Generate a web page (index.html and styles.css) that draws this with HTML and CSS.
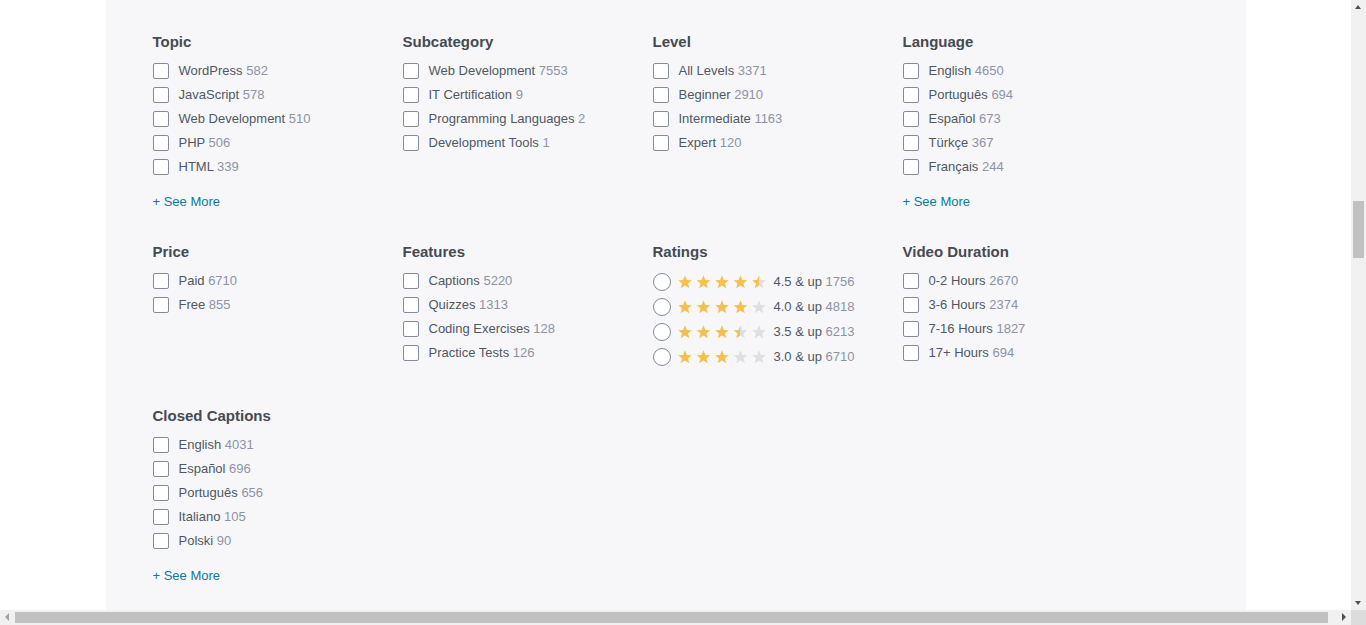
FILE: index.html
```html
<!DOCTYPE html>
<html lang="en">
<head>
<meta charset="utf-8">
<title>Filters</title>
<link rel="stylesheet" href="styles.css">
</head>
<body>
<svg class="defs" width="0" height="0" aria-hidden="true">
  <defs>
    <linearGradient id="half" x1="0" x2="1" y1="0" y2="0">
      <stop offset="50%" stop-color="#f4c150"/>
      <stop offset="50%" stop-color="#dedfe0"/>
    </linearGradient>
    <symbol id="star" viewBox="0 0 14 14">
      <polygon points="7,0.3 8.9,5.0 13.8,5.25 10.0,8.45 11.3,13.3 7,10.6 2.7,13.3 4.0,8.45 0.2,5.25 5.1,5.0"/>
    </symbol>
  </defs>
</svg>
<div class="page">
  <section class="filters">
    <div class="group">
      <h3>Topic</h3>
      <ul>
        <li><span class="box"></span>WordPress <span class="n">582</span></li>
        <li><span class="box"></span>JavaScript <span class="n">578</span></li>
        <li><span class="box"></span>Web Development <span class="n">510</span></li>
        <li><span class="box"></span>PHP <span class="n">506</span></li>
        <li><span class="box"></span>HTML <span class="n">339</span></li>
      </ul>
      <a class="more" href="#">+ See More</a>
    </div>
    <div class="group">
      <h3>Subcategory</h3>
      <ul>
        <li><span class="box"></span>Web Development <span class="n">7553</span></li>
        <li><span class="box"></span>IT Certification <span class="n">9</span></li>
        <li><span class="box"></span>Programming Languages <span class="n">2</span></li>
        <li><span class="box"></span>Development Tools <span class="n">1</span></li>
      </ul>
    </div>
    <div class="group">
      <h3>Level</h3>
      <ul>
        <li><span class="box"></span>All Levels <span class="n">3371</span></li>
        <li><span class="box"></span>Beginner <span class="n">2910</span></li>
        <li><span class="box"></span>Intermediate <span class="n">1163</span></li>
        <li><span class="box"></span>Expert <span class="n">120</span></li>
      </ul>
    </div>
    <div class="group">
      <h3>Language</h3>
      <ul>
        <li><span class="box"></span>English <span class="n">4650</span></li>
        <li><span class="box"></span>Português <span class="n">694</span></li>
        <li><span class="box"></span>Español <span class="n">673</span></li>
        <li><span class="box"></span>Türkçe <span class="n">367</span></li>
        <li><span class="box"></span>Français <span class="n">244</span></li>
      </ul>
      <a class="more" href="#">+ See More</a>
    </div>

    <div class="group">
      <h3>Price</h3>
      <ul>
        <li><span class="box"></span>Paid <span class="n">6710</span></li>
        <li><span class="box"></span>Free <span class="n">855</span></li>
      </ul>
    </div>
    <div class="group">
      <h3>Features</h3>
      <ul>
        <li><span class="box"></span>Captions <span class="n">5220</span></li>
        <li><span class="box"></span>Quizzes <span class="n">1313</span></li>
        <li><span class="box"></span>Coding Exercises <span class="n">128</span></li>
        <li><span class="box"></span>Practice Tests <span class="n">126</span></li>
      </ul>
    </div>
    <div class="group">
      <h3>Ratings</h3>
      <ul class="ratings">
        <li><span class="radio"></span>
          <svg class="stars" width="88" height="14" viewBox="0 0 88 14">
            <use href="#star" x="0" width="14" height="14" class="on"/>
            <use href="#star" x="18.5" width="14" height="14" class="on"/>
            <use href="#star" x="37" width="14" height="14" class="on"/>
            <use href="#star" x="55.5" width="14" height="14" class="on"/>
            <use href="#star" x="74" width="14" height="14" class="half"/>
          </svg>4.5 &amp; up <span class="n">1756</span></li>
        <li><span class="radio"></span>
          <svg class="stars" width="88" height="14" viewBox="0 0 88 14">
            <use href="#star" x="0" width="14" height="14" class="on"/>
            <use href="#star" x="18.5" width="14" height="14" class="on"/>
            <use href="#star" x="37" width="14" height="14" class="on"/>
            <use href="#star" x="55.5" width="14" height="14" class="on"/>
            <use href="#star" x="74" width="14" height="14" class="off"/>
          </svg>4.0 &amp; up <span class="n">4818</span></li>
        <li><span class="radio"></span>
          <svg class="stars" width="88" height="14" viewBox="0 0 88 14">
            <use href="#star" x="0" width="14" height="14" class="on"/>
            <use href="#star" x="18.5" width="14" height="14" class="on"/>
            <use href="#star" x="37" width="14" height="14" class="on"/>
            <use href="#star" x="55.5" width="14" height="14" class="half"/>
            <use href="#star" x="74" width="14" height="14" class="off"/>
          </svg>3.5 &amp; up <span class="n">6213</span></li>
        <li><span class="radio"></span>
          <svg class="stars" width="88" height="14" viewBox="0 0 88 14">
            <use href="#star" x="0" width="14" height="14" class="on"/>
            <use href="#star" x="18.5" width="14" height="14" class="on"/>
            <use href="#star" x="37" width="14" height="14" class="on"/>
            <use href="#star" x="55.5" width="14" height="14" class="off"/>
            <use href="#star" x="74" width="14" height="14" class="off"/>
          </svg>3.0 &amp; up <span class="n">6710</span></li>
      </ul>
    </div>
    <div class="group">
      <h3>Video Duration</h3>
      <ul>
        <li><span class="box"></span>0-2 Hours <span class="n">2670</span></li>
        <li><span class="box"></span>3-6 Hours <span class="n">2374</span></li>
        <li><span class="box"></span>7-16 Hours <span class="n">1827</span></li>
        <li><span class="box"></span>17+ Hours <span class="n">694</span></li>
      </ul>
    </div>

    <div class="group">
      <h3>Closed Captions</h3>
      <ul>
        <li><span class="box"></span>English <span class="n">4031</span></li>
        <li><span class="box"></span>Español <span class="n">696</span></li>
        <li><span class="box"></span>Português <span class="n">656</span></li>
        <li><span class="box"></span>Italiano <span class="n">105</span></li>
        <li><span class="box"></span>Polski <span class="n">90</span></li>
      </ul>
      <a class="more" href="#">+ See More</a>
    </div>
  </section>
</div>

<div class="scrollbar vertical" aria-hidden="true">
  <span class="arrow up"></span>
  <span class="thumb"></span>
  <span class="arrow down"></span>
</div>
<div class="scrollbar horizontal" aria-hidden="true">
  <span class="arrow left"></span>
  <span class="thumb"></span>
  <span class="arrow right"></span>
</div>
<div class="scrollbar corner" aria-hidden="true"></div>
</body>
</html>
```

FILE: styles.css
```css
html, body {
  margin: 0;
  padding: 0;
  background: #ffffff;
}
body {
  font-family: "Liberation Sans", Arial, sans-serif;
  font-size: 13px;
  color: #505763;
  padding-right: 15px;
  overflow: hidden;
  height: 625px;
  box-sizing: border-box;
}
.defs {
  position: absolute;
  width: 0;
  height: 0;
  overflow: hidden;
}
.page {
  width: 1140px;
  height: 625px;
  margin: 0 auto;
  background: #f7f7f9;
}
.filters {
  display: grid;
  grid-template-columns: repeat(4, 250px);
  row-gap: 30px;
  padding: 32px 47px 26px;
  align-items: start;
}
.group h3 {
  margin: 0 0 7px;
  font-size: 15px;
  line-height: 20px;
  font-weight: bold;
  color: #464a52;
}
.group ul {
  list-style: none;
  margin: 0;
  padding: 0;
}
.group li {
  display: flex;
  align-items: center;
  height: 24px;
  line-height: 24px;
  white-space: pre;
}
.box {
  width: 16px;
  height: 16px;
  box-sizing: border-box;
  border: 1px solid #858a9b;
  border-radius: 2px;
  background: #ffffff;
  margin-right: 10px;
  flex: none;
}
.n {
  color: #8d93a4;
}
.more {
  display: block;
  margin-top: 13px;
  line-height: 20px;
  color: #0e7a93;
  text-decoration: none;
}
.ratings {
  padding-bottom: 7px !important;
}
.ratings li {
  height: 25px;
  line-height: 25px;
}
.radio {
  width: 18px;
  height: 18px;
  box-sizing: border-box;
  border: 1px solid #858a9b;
  border-radius: 50%;
  background: #ffffff;
  margin-right: 7px;
  flex: none;
}
.stars {
  display: block;
  flex: none;
  margin-right: 8px;
}
.stars .on { fill: #f4c150; }
.stars .off { fill: #dedfe0; }
.stars .half { fill: url(#half); }

/* browser scrollbars drawn over the page */
.scrollbar {
  position: fixed;
  background: #f1f1f1;
}
.scrollbar.vertical {
  top: 0;
  right: 0;
  width: 15px;
  height: 610px;
}
.scrollbar.horizontal {
  left: 0;
  bottom: 0;
  width: 1351px;
  height: 15px;
}
.scrollbar.corner {
  right: 0;
  bottom: 0;
  width: 15px;
  height: 15px;
  background: #dcdcdc;
}
.scrollbar .thumb {
  position: absolute;
  background: #c1c1c1;
}
.scrollbar.vertical .thumb {
  left: 2px;
  top: 201px;
  width: 11px;
  height: 57px;
}
.scrollbar.horizontal .thumb {
  top: 2px;
  left: 15px;
  width: 1313px;
  height: 11px;
}
.arrow {
  position: absolute;
  width: 0;
  height: 0;
  border-style: solid;
  border-color: transparent;
}
.arrow.up {
  left: 4px;
  top: 5px;
  border-width: 0 3.5px 4px;
  border-bottom-color: #505050;
}
.arrow.down {
  left: 4px;
  bottom: 5px;
  border-width: 4px 3.5px 0;
  border-top-color: #505050;
}
.arrow.left {
  left: 5px;
  top: 3px;
  border-width: 4px 4px 4px 0;
  border-right-color: #a3a3a3;
}
.arrow.right {
  right: 5px;
  top: 3px;
  border-width: 4px 0 4px 4px;
  border-left-color: #505050;
}
```
